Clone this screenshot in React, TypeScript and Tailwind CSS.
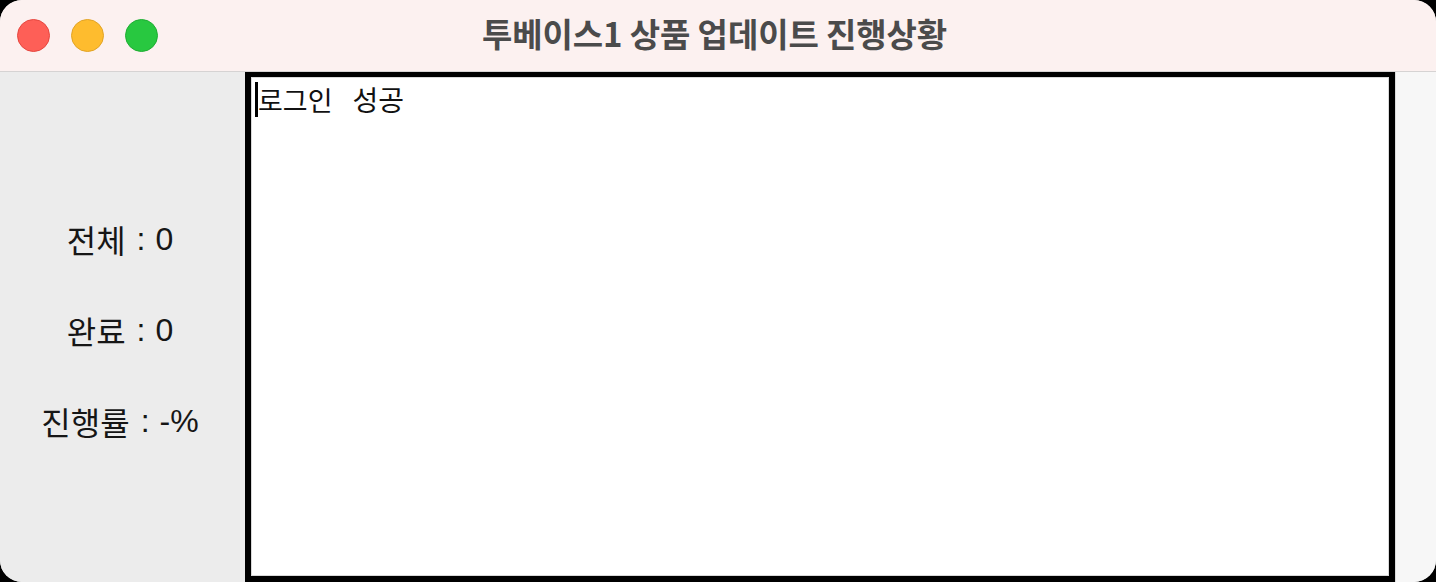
import React from "react";

const font = { fontFamily: '"Liberation Sans", "Noto Sans CJK KR", sans-serif' };
const kr = { fontFamily: '"Noto Sans CJK KR", sans-serif' };

function Row({ label, value }: { label: string; value: string }) {
  return (
    <div className="leading-[40px] flex items-center whitespace-pre">
      <span style={kr}>{label}</span>
      <span className="ml-[11px] mr-[10px]">:</span>
      <span>{value}</span>
    </div>
  );
}

export default function App() {
  return (
    <div className="w-[1436px] h-[582px] bg-black overflow-hidden">
      <div className="w-full h-full rounded-[22px] overflow-hidden flex flex-col bg-[#ececec]" style={font}>
        <div className="h-[72px] shrink-0 bg-[#fcf1f0] border-b border-[#d6d3d3] flex items-center relative">
          <div className="flex items-center gap-[21px] pl-[17px]">
            <div className="w-[33px] h-[33px] rounded-full bg-[#fe5f57] border border-[#e5473f]" />
            <div className="w-[33px] h-[33px] rounded-full bg-[#febc2e] border border-[#e1a325]" />
            <div className="w-[33px] h-[33px] rounded-full bg-[#28c840] border border-[#1fad33]" />
          </div>
          <div className="absolute inset-0 flex items-center justify-center pointer-events-none">
            <span className="text-[33px] font-bold text-[#4b4b4b] tracking-[-0.1px] leading-none pb-[4px] pr-[7px]" style={kr}>
              투베이스1 상품 업데이트 진행상황
            </span>
          </div>
        </div>
        <div className="flex flex-1 min-h-0">
          <div className="w-[245px] shrink-0 bg-[#ececec] flex flex-col items-center pt-[147px] pr-[5px] gap-[51px] text-[32px] text-[#161616]">
            <Row label="전체" value="0" />
            <Row label="완료" value="0" />
            <Row label="진행률" value="-%" />
          </div>
          <div className="w-[1150px] shrink-0 border-[6px] border-t-[5px] border-black bg-white">
            <div className="w-full h-full border border-[#d9d9d9] flex items-start pl-[3px] pt-[3px]">
              <div className="w-[3px] h-[35px] bg-black mt-[1px]" />
              <span className="text-[27px] leading-[38px] text-[#111] whitespace-pre" style={kr}>
                로그인
              </span>
              <span className="text-[28px] leading-[38px] text-[#111] whitespace-pre ml-[20px] -mt-[1px]" style={kr}>
                성공
              </span>
            </div>
          </div>
          <div className="flex-1 bg-[#f7f7f7] border-l border-[#dcdcdc]" />
        </div>
      </div>
    </div>
  );
}
